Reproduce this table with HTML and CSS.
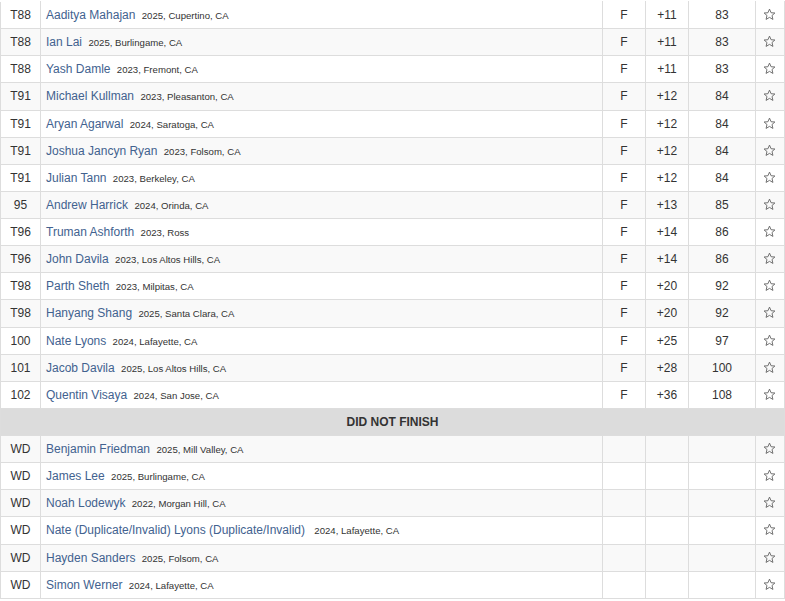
FILE: index.html
```html
<!DOCTYPE html>
<html>
<head>
<meta charset="utf-8">
<link rel="stylesheet" href="styles.css">
</head>
<body>
<svg width="0" height="0" class="defs">
  <defs>
    <symbol id="star" viewBox="0 0 14 14">
      <path d="M7 1.2 L8.7 5.1 L12.8 5.4 L9.7 8.1 L10.7 12.3 L7 10.1 L3.3 12.3 L4.3 8.1 L1.2 5.4 L5.3 5.1 Z" fill="none" stroke="#666" stroke-width="1" stroke-linejoin="round"/>
    </symbol>
  </defs>
</svg>
<table class="board">
  <colgroup>
    <col class="c-pos"><col class="c-name"><col class="c-stat"><col class="c-par"><col class="c-tot"><col class="c-fav">
  </colgroup>
  <tbody>
    <tr class="first"><td>T88</td><td class="name"><a>Aaditya Mahajan</a> <span class="home">2025, Cupertino, CA</span></td><td>F</td><td>+11</td><td>83</td><td><svg class="star"><use href="#star"/></svg></td></tr>
    <tr class="alt"><td>T88</td><td class="name"><a>Ian Lai</a> <span class="home">2025, Burlingame, CA</span></td><td>F</td><td>+11</td><td>83</td><td><svg class="star"><use href="#star"/></svg></td></tr>
    <tr><td>T88</td><td class="name"><a>Yash Damle</a> <span class="home">2023, Fremont, CA</span></td><td>F</td><td>+11</td><td>83</td><td><svg class="star"><use href="#star"/></svg></td></tr>
    <tr class="alt"><td>T91</td><td class="name"><a>Michael Kullman</a> <span class="home">2023, Pleasanton, CA</span></td><td>F</td><td>+12</td><td>84</td><td><svg class="star"><use href="#star"/></svg></td></tr>
    <tr><td>T91</td><td class="name"><a>Aryan Agarwal</a> <span class="home">2024, Saratoga, CA</span></td><td>F</td><td>+12</td><td>84</td><td><svg class="star"><use href="#star"/></svg></td></tr>
    <tr class="alt"><td>T91</td><td class="name"><a>Joshua Jancyn Ryan</a> <span class="home">2023, Folsom, CA</span></td><td>F</td><td>+12</td><td>84</td><td><svg class="star"><use href="#star"/></svg></td></tr>
    <tr><td>T91</td><td class="name"><a>Julian Tann</a> <span class="home">2023, Berkeley, CA</span></td><td>F</td><td>+12</td><td>84</td><td><svg class="star"><use href="#star"/></svg></td></tr>
    <tr class="alt"><td>95</td><td class="name"><a>Andrew Harrick</a> <span class="home">2024, Orinda, CA</span></td><td>F</td><td>+13</td><td>85</td><td><svg class="star"><use href="#star"/></svg></td></tr>
    <tr><td>T96</td><td class="name"><a>Truman Ashforth</a> <span class="home">2023, Ross</span></td><td>F</td><td>+14</td><td>86</td><td><svg class="star"><use href="#star"/></svg></td></tr>
    <tr class="alt"><td>T96</td><td class="name"><a>John Davila</a> <span class="home">2023, Los Altos Hills, CA</span></td><td>F</td><td>+14</td><td>86</td><td><svg class="star"><use href="#star"/></svg></td></tr>
    <tr><td>T98</td><td class="name"><a>Parth Sheth</a> <span class="home">2023, Milpitas, CA</span></td><td>F</td><td>+20</td><td>92</td><td><svg class="star"><use href="#star"/></svg></td></tr>
    <tr class="alt"><td>T98</td><td class="name"><a>Hanyang Shang</a> <span class="home">2025, Santa Clara, CA</span></td><td>F</td><td>+20</td><td>92</td><td><svg class="star"><use href="#star"/></svg></td></tr>
    <tr><td>100</td><td class="name"><a>Nate Lyons</a> <span class="home">2024, Lafayette, CA</span></td><td>F</td><td>+25</td><td>97</td><td><svg class="star"><use href="#star"/></svg></td></tr>
    <tr class="alt"><td>101</td><td class="name"><a>Jacob Davila</a> <span class="home">2025, Los Altos Hills, CA</span></td><td>F</td><td>+28</td><td>100</td><td><svg class="star"><use href="#star"/></svg></td></tr>
    <tr><td>102</td><td class="name"><a>Quentin Visaya</a> <span class="home">2024, San Jose, CA</span></td><td>F</td><td>+36</td><td>108</td><td><svg class="star"><use href="#star"/></svg></td></tr>
    <tr class="section"><td colspan="6">DID NOT FINISH</td></tr>
    <tr class="alt"><td>WD</td><td class="name"><a>Benjamin Friedman</a> <span class="home">2025, Mill Valley, CA</span></td><td></td><td></td><td></td><td><svg class="star"><use href="#star"/></svg></td></tr>
    <tr><td>WD</td><td class="name"><a>James Lee</a> <span class="home">2025, Burlingame, CA</span></td><td></td><td></td><td></td><td><svg class="star"><use href="#star"/></svg></td></tr>
    <tr class="alt"><td>WD</td><td class="name"><a>Noah Lodewyk</a> <span class="home">2022, Morgan Hill, CA</span></td><td></td><td></td><td></td><td><svg class="star"><use href="#star"/></svg></td></tr>
    <tr><td>WD</td><td class="name"><a>Nate (Duplicate/Invalid) Lyons (Duplicate/Invalid)</a> <span class="home wide">2024, Lafayette, CA</span></td><td></td><td></td><td></td><td><svg class="star"><use href="#star"/></svg></td></tr>
    <tr class="alt"><td>WD</td><td class="name"><a>Hayden Sanders</a> <span class="home">2025, Folsom, CA</span></td><td></td><td></td><td></td><td><svg class="star"><use href="#star"/></svg></td></tr>
    <tr><td>WD</td><td class="name"><a>Simon Werner</a> <span class="home">2024, Lafayette, CA</span></td><td></td><td></td><td></td><td><svg class="star"><use href="#star"/></svg></td></tr>
  </tbody>
</table>
</body>
</html>
```
FILE: styles.css
```css
html, body {
  margin: 0;
  padding: 0;
  background: #fff;
}
.defs {
  position: absolute;
  width: 0;
  height: 0;
  overflow: hidden;
}
.board {
  width: 785px;
  margin-top: 1px;
  border-collapse: collapse;
  table-layout: fixed;
  font-family: "Liberation Sans", Arial, sans-serif;
  font-size: 12px;
  color: #333;
}
.c-pos { width: 40px; }
.c-name { width: 562px; }
.c-stat { width: 43px; }
.c-par { width: 43px; }
.c-tot { width: 67px; }
.c-fav { width: 29px; }
.board td {
  border: 1px solid #ddd;
  padding: 5.07px 5px 4.07px;
  line-height: 17px;
  text-align: center;
  vertical-align: middle;
  white-space: nowrap;
}
.board tr.first td {
  border-top-color: #fff;
}
.board tr.alt td {
  background: #f9f9f9;
}
.board td.name {
  text-align: left;
  padding-left: 5px;
}
.name a {
  color: #42628f;
  text-decoration: none;
}
.home {
  font-size: 9.6px;
  margin-left: 3px;
  color: #333;
}
.home.wide {
  margin-left: 6px;
}
.section td {
  background: #dcdcdc;
  font-weight: bold;
  color: #333;
}
.star {
  display: inline-block;
  width: 13px;
  height: 13px;
  vertical-align: -2px;
  margin-left: -1px;
}
```
